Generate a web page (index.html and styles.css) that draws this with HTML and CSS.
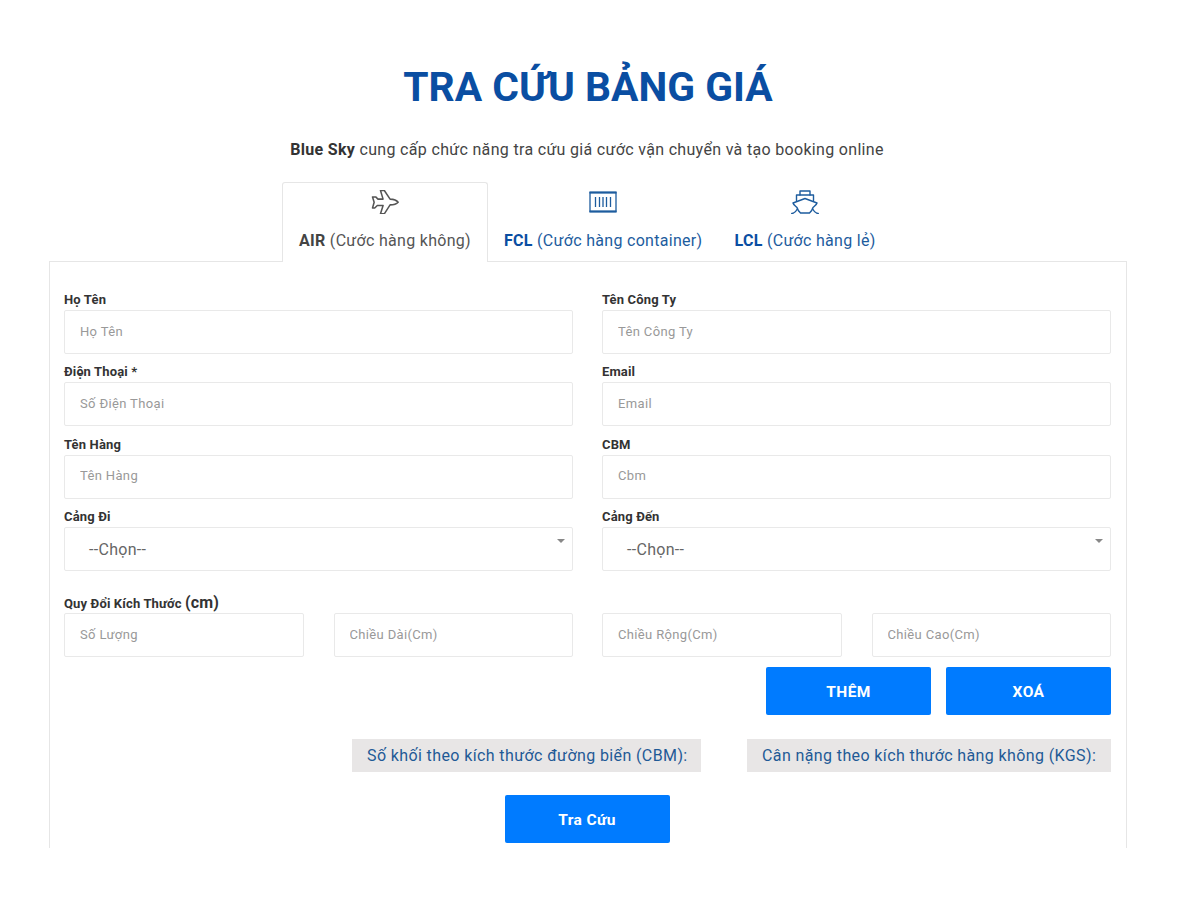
FILE: index.html
```html
<!DOCTYPE html>
<html lang="vi">
<head>
<meta charset="utf-8">
<title>Tra cứu bảng giá</title>
<link rel="stylesheet" href="styles.css">
</head>
<body>
<main class="page">
  <h1 class="title">TRA CỨU BẢNG GIÁ</h1>
  <p class="subtitle"><b>Blue Sky</b> cung cấp chức năng tra cứu giá cước vận chuyển và tạo booking online</p>
  <nav class="tabs">
    <a class="tab tab-active">
      <svg class="tab-icon" viewBox="-1 -.5 28 25" fill="none" stroke="currentColor" stroke-width="1.600" stroke-linejoin="round"><path d="M8.300 0h4l6 9c4 .2 7 1.500 8.400 3.300-1.400 1.500-4.400 2.700-8.400 2.700l-6 9.300h-4l2.700-8.600h-6l-2.700 2.600h-2.300l1.700-6-1.700-5.600h3.300l2.400 2.300h5.300z"/></svg>
      <span class="tab-label"><b>AIR</b> (Cước hàng không)</span>
    </a>
    <a class="tab">
      <svg class="tab-icon" viewBox="0 0 28 24" fill="none" stroke="currentColor" stroke-width="1.300"><path d="M1 2.500h26v19h-26z"/><path d="M.5 2.500h27M.5 21.500h27" stroke-width="2"/><path d="M6.500 7v10M10.500 7v10M14 7v10M17.500 7v10M21.500 7v10"/></svg>
      <span class="tab-label"><b>FCL</b> (Cước hàng container)</span>
    </a>
    <a class="tab">
      <svg class="tab-icon" viewBox="0 0 28 24" fill="none" stroke="currentColor" stroke-width="1.400" stroke-linejoin="round" stroke-linecap="round"><path d="M9 5V1h10v4"/><path d="M5.500 10.500V5h17v5.500"/><path d="M2 13L14 8.500 26 13c-.5 2-2.500 3-4 4.500-.5 2-2 4-3.500 5.500h-9C8 21.500 6.500 19.500 6 17.500 4.500 16 2.500 15 2 13z"/><path d="M.7 23.500c2.500 0 4.300-2 5.600-4.500M27.300 23.500c-2.500 0-4.300-2-5.600-4.500"/></svg>
      <span class="tab-label"><b>LCL</b> (Cước hàng lẻ)</span>
    </a>
  </nav>
  <form class="panel">
    <div class="grid-2">
      <div class="field"><label class="label">Họ Tên</label><input class="control" placeholder="Họ Tên"></div>
      <div class="field"><label class="label">Tên Công Ty</label><input class="control" placeholder="Tên Công Ty"></div>
      <div class="field"><label class="label">Điện Thoại *</label><input class="control" placeholder="Số Điện Thoại"></div>
      <div class="field"><label class="label">Email</label><input class="control" placeholder="Email"></div>
      <div class="field"><label class="label">Tên Hàng</label><input class="control" placeholder="Tên Hàng"></div>
      <div class="field"><label class="label">CBM</label><input class="control" placeholder="Cbm"></div>
      <div class="field"><label class="label">Cảng Đi</label><div class="control select">--Chọn--<span class="caret"></span></div></div>
      <div class="field"><label class="label">Cảng Đến</label><div class="control select">--Chọn--<span class="caret"></span></div></div>
    </div>
    <label class="label label-dim">Quy Đổi Kích Thước <span class="unit">(cm)</span></label>
    <div class="grid-2">
      <div class="grid-pair">
        <input class="control" placeholder="Số Lượng">
        <input class="control" placeholder="Chiều Dài(Cm)">
      </div>
      <div class="grid-pair">
        <input class="control" placeholder="Chiều Rộng(Cm)">
        <input class="control" placeholder="Chiều Cao(Cm)">
      </div>
    </div>
    <div class="actions">
      <button type="button" class="btn">THÊM</button>
      <button type="button" class="btn">XOÁ</button>
    </div>
    <div class="results">
      <div class="result result-cbm">Số khối theo kích thước đường biển (CBM):</div>
      <div class="result result-kgs">Cân nặng theo kích thước hàng không (KGS):</div>
    </div>
    <div class="submit"><button type="button" class="btn">Tra Cứu</button></div>
  </form>
</main>
</body>
</html>
```
FILE: styles.css
```css
* { box-sizing: border-box; }
html, body { margin: 0; background: #fff; }
body { font-family: Roboto, "Noto Sans", sans-serif; color: #333; height: 900px; overflow: hidden; }
.page { width: 1078px; margin-left: 49px; height: 848px; overflow: hidden; padding-top: 65px; }
.title { margin: 0; text-align: center; font-size: 40.800px; line-height: 44px; font-weight: 700; color: #0a4ea2; }
.subtitle { margin: 31px 0 0; text-align: center; font-size: 16px; letter-spacing: 0.320px; line-height: 20px; color: #444; padding-right: 2px; }
.subtitle b { color: #333; }
.tabs { display: flex; margin: 22px 0 0 233px; height: 80px; position: relative; z-index: 1; }
.tab { display: flex; flex-direction: column; align-items: center; padding: 8px 16px 0; color: #1d5c9e; }
.tab b { color: #0a4ea2; }
.tab-active { color: #555; background: #fff; border: 1px solid #e6e6e6; border-bottom: 0; border-radius: 3px 3px 0 0; padding: 7px 0 0; width: 206px; }
.tab-active b { color: #444; }
.tab-icon { width: 28px; height: 24px; display: block; }
.tab-label { margin-top: 16px; font-size: 16px; letter-spacing: 0.300px; line-height: 22px; white-space: nowrap; }
.panel { border: 1px solid #e6e6e6; margin-top: -1px; padding: 29px 15px 0 14px; height: 700px; }
.grid-2 { display: grid; grid-template-columns: 509px 509px; column-gap: 29px; row-gap: 9.330px; }
.grid-pair { display: grid; grid-template-columns: 1fr 1fr; column-gap: 30px; }
.grid-pair .control { padding-bottom: 0; }
.label { display: block; height: 19px; font-size: 13px; letter-spacing: 0.150px; line-height: 17px; font-weight: 700; color: #333; }
.label-dim { margin-top: 21px; height: 21px; line-height: 21px; }
.unit { font-size: 16px; }
.control { display: block; width: 100%; height: 44px; border: 1px solid #e9e9e9; border-radius: 2px; background: #fff; padding: 0 15px 2px; font: 13px Roboto, sans-serif; letter-spacing: 0.350px; color: #555; outline: 0; }
.control::placeholder { color: #999; opacity: 1; }
.select { position: relative; font-size: 16px; letter-spacing: 0.300px; line-height: 44px; color: #666; padding-left: 24px; }
.caret { position: absolute; top: 11px; right: 7px; border: 4px solid transparent; border-top-color: #888; border-bottom: 0; }
.actions { display: flex; justify-content: flex-end; gap: 15px; margin-top: 10px; }
.btn { width: 165px; height: 48px; border: 0; border-radius: 2px; background: #007bff; color: #fff; padding: 2px 0 0; font: 700 15.500px Roboto, sans-serif; letter-spacing: 0.400px; }
.results { display: flex; justify-content: flex-end; gap: 46px; margin-top: 24px; }
.result { height: 33px; line-height: 33px; padding: 0 15px; background: #e8e6e6; color: #1f5a96; font-size: 16px; letter-spacing: 0.390px; white-space: nowrap; }
.result-cbm { width: 349px; }
.result-kgs { width: 364px; }
.submit { display: flex; justify-content: center; margin-top: 23px; padding-right: 1px; }
```
